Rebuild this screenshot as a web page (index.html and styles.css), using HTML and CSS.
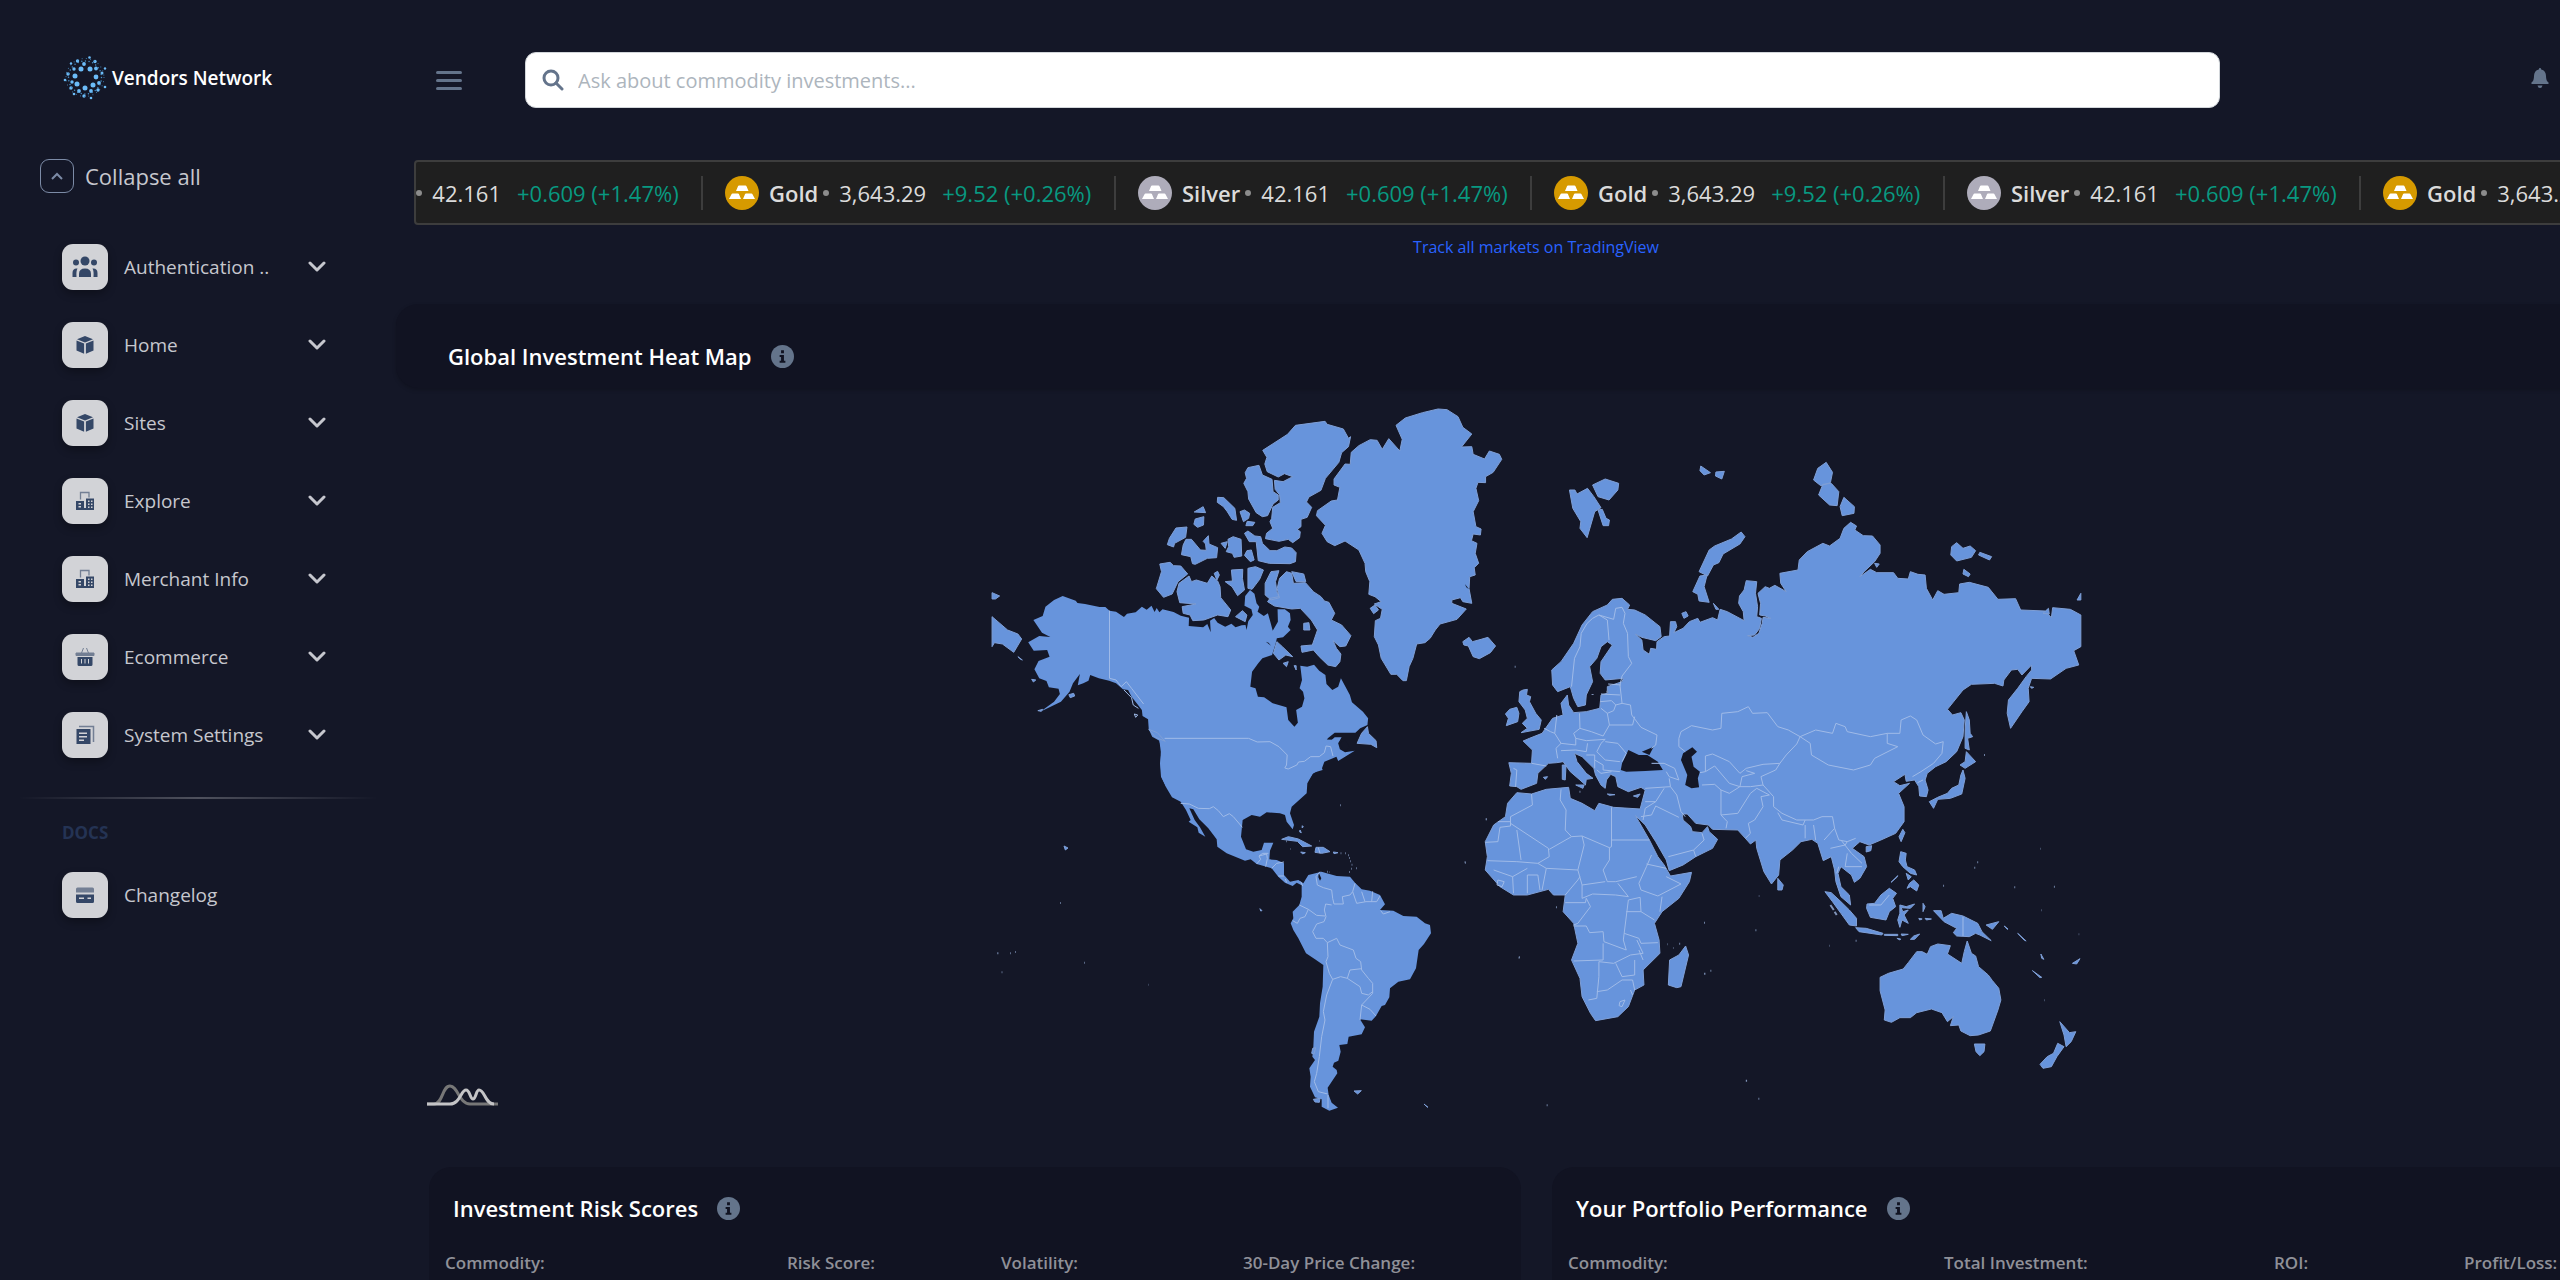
FILE: index.html
```html
<!DOCTYPE html>
<html lang="en">
  <head>
    <meta charset="UTF-8" />
    <meta name="viewport" content="width=device-width, initial-scale=1.0" />
    <title>Vendors Network</title>
    <link rel="stylesheet" href="styles.css">
  </head>
  <body>
    <!-- shared icons -->
    <svg class="sprite" aria-hidden="true">
      <symbol id="chevron" viewBox="0 0 18 12"><path d="M2 2l7 7 7-7" fill="none" stroke="currentColor" stroke-width="3" stroke-linecap="round" stroke-linejoin="round"/></symbol>
      <symbol id="cube" viewBox="0 0 20 20"><path d="M10 1l8 3.200-8 3.300-8-3.300zM1.500 5.500l7.600 3.100v10.200l-7.600-3.200zM18.500 5.500l-7.600 3.100v10.200l7.600-3.200z"/></symbol>
      <symbol id="office" viewBox="0 0 20 20">
        <path d="M5.500 8.500v-7h8.500v5" fill="none" stroke="currentColor" stroke-width="1.300" opacity=".6"/>
        <path fill-rule="evenodd" d="M1 10h8v7h2V7.500h8V19H1zM3.500 12v1.500h2.500V12zM3.500 15v1.500h2.500V15zM13 9.500V11h1.500V9.500zM16 9.500V11h1.500V9.500zM13 12.500V14h1.500v-1.500zM16 12.500V14h1.500v-1.500zM13 15.500V17h1.500v-1.500zM16 15.500V17h1.500v-1.500z"/>
      </symbol>
      <symbol id="basket" viewBox="0 0 20 20">
        <path d="M1 6h18v2.500H1zM6.500 6l2-5M13.500 6l-2-5" stroke="currentColor" opacity=".6"/>
        <path fill-rule="evenodd" d="M2.500 10h15v7.500q0 1.500-1.500 1.500H4q-1.500 0-1.500-1.500zM6 12v4.500h1V12zM9.500 12v4.500h1V12zM13 12v4.500h1V12z"/>
      </symbol>
      <symbol id="papers" viewBox="0 0 20 20">
        <path d="M4 1.500h14.500V17" fill="none" stroke="currentColor" stroke-width="1.500" opacity=".6"/>
        <path fill-rule="evenodd" d="M1.500 4h14v15h-14zM4 7.500V9h8V7.500zM4 11v1.500h8V11zM4 14.500V16h5v-1.500z"/>
      </symbol>
      <symbol id="card" viewBox="0 0 20 20">
        <path d="M1 7.500V4q0-1.500 1.500-1.500h15Q19 2.500 19 4v3.500z" opacity=".6"/>
        <path fill-rule="evenodd" d="M1 9.500h18v7q0 1.500-1.500 1.500h-15Q1 18 1 16.500zM4 12.500V14h5v-1.500zM12.500 12.500V14H16v-1.500z"/>
      </symbol>
      <symbol id="users" viewBox="0 0 26 22">
        <circle cx="13" cy="5" r="4.500"/><circle cx="4" cy="6.500" r="3"/><circle cx="22" cy="6.500" r="3"/>
        <path d="M7 21v-3q0-5.500 6-5.500t6 5.500v3zM.500 21v-4q0-5 5-4.500-1.500 2.500-1 8.500zM25.500 21v-4q0-5-5-4.500 1.500 2.500 1 8.500z"/>
      </symbol>
      <symbol id="info" viewBox="0 0 24 24">
        <circle cx="12" cy="12" r="12" fill="#64748b"/>
        <path d="M10.500 5.500h3v3h-3zM9 10.500h4.500v6H15v2H9v-2h1.500v-4H9z" fill="#111322"/>
      </symbol>
      <symbol id="bars" viewBox="0 0 34 34">
        <circle cx="17" cy="17" r="17"/>
        <path fill="#fff" d="M14 9.500h6.500q.700 0 1 .700l2 4.800h-12.500l2-4.800q.300-.700 1-.700zM7.500 17.500h5.500q.700 0 1 .700l2 4.800H4l2.500-4.800q.300-.700 1-.700zM21 17.500h5.500q.700 0 1 .700L30 23H18l2-4.800q.300-.700 1-.700z"/>
      </symbol>
    </svg>

    <div class="app">
      <aside class="sidebar">
        <a class="brand" href="#">
          <svg width="44" height="44" viewBox="0 0 44 44">
            <g fill="#6cbcf8">
              <circle cx="18" cy="13" r="2.500"/><circle cx="27" cy="13" r="2.500"/><circle cx="33" cy="21" r="2.400"/><circle cx="30" cy="29" r="2.500"/><circle cx="22" cy="32" r="2.500"/><circle cx="14" cy="28" r="2.500"/><circle cx="12" cy="20" r="2.500"/>
              <circle cx="21" cy="8" r="1.900"/><circle cx="33" cy="12.500" r="1.900"/><circle cx="36" cy="27" r="1.900"/><circle cx="28" cy="35" r="1.900"/><circle cx="16" cy="35" r="1.900"/><circle cx="9" cy="26" r="1.700"/><circle cx="11" cy="13" r="1.700"/>
              <circle cx="14.500" cy="5" r="1.700"/><circle cx="32" cy="5.500" r="1.700"/><circle cx="39" cy="17" r="1.500"/><circle cx="35" cy="34" r="1.700"/><circle cx="21" cy="40" r="1.700"/><circle cx="8" cy="32" r="1.700"/><circle cx="5" cy="18" r="1.700"/>
              <circle cx="26.500" cy="1.500" r="1.300"/><circle cx="42" cy="12.500" r="1.200"/><circle cx="42" cy="31" r="1.300"/><circle cx="28" cy="42" r="1.300"/><circle cx="11" cy="38" r="1.300"/><circle cx="2" cy="24" r="1.300"/><circle cx="8" cy="7.500" r="1.200"/>
            </g>
            <g fill="none" stroke="#4a8fc4" stroke-linecap="round">
              <circle cx="22" cy="21.500" r="16.500" stroke-width="1.500" stroke-dasharray="0 3.700"/>
              <circle cx="22" cy="21.500" r="19" stroke-width="1" stroke-dasharray="0 4.300"/>
            </g>
          </svg>
          <span>Vendors Network</span>
        </a>
        <button class="collapse">
          <span class="collapse-box"><svg width="12" height="8" viewBox="0 0 12 8"><path d="M1 7l5-5 5 5" fill="none" stroke="#7c8ba6" stroke-width="2"/></svg></span>
          Collapse all
        </button>
        <nav class="nav">
          <button class="nav-item"><span class="tile"><svg width="26" height="22"><use href="#users"/></svg></span><span class="label">Authentication ..</span><svg class="chevron"><use href="#chevron"/></svg></button>
          <button class="nav-item"><span class="tile"><svg><use href="#cube"/></svg></span><span class="label">Home</span><svg class="chevron"><use href="#chevron"/></svg></button>
          <button class="nav-item"><span class="tile"><svg><use href="#cube"/></svg></span><span class="label">Sites</span><svg class="chevron"><use href="#chevron"/></svg></button>
          <button class="nav-item"><span class="tile"><svg><use href="#office"/></svg></span><span class="label">Explore</span><svg class="chevron"><use href="#chevron"/></svg></button>
          <button class="nav-item"><span class="tile"><svg><use href="#office"/></svg></span><span class="label">Merchant Info</span><svg class="chevron"><use href="#chevron"/></svg></button>
          <button class="nav-item"><span class="tile"><svg><use href="#basket"/></svg></span><span class="label">Ecommerce</span><svg class="chevron"><use href="#chevron"/></svg></button>
          <button class="nav-item"><span class="tile"><svg><use href="#papers"/></svg></span><span class="label">System Settings</span><svg class="chevron"><use href="#chevron"/></svg></button>
        </nav>
        <hr class="divider">
        <h6 class="nav-title">DOCS</h6>
        <a class="nav-item" href="#"><span class="tile"><svg><use href="#card"/></svg></span><span class="label">Changelog</span></a>
      </aside>

      <main class="main">
        <header class="topbar">
          <button class="menu" aria-label="Toggle menu"><i></i><i></i><i></i></button>
          <label class="search">
            <svg width="22" height="22" viewBox="0 0 22 22"><circle cx="9" cy="9" r="7" fill="none" stroke="#64748b" stroke-width="3"/><path d="M14 14l6 6" stroke="#64748b" stroke-width="3" stroke-linecap="round"/></svg>
            <input type="text" placeholder="Ask about commodity investments..." aria-label="Ask about commodity investments">
          </label>
          <button class="bell" aria-label="Notifications"><svg width="18" height="20" viewBox="0 0 18 20"><path fill="#64748b" d="M9 0q1.200 0 1.200 1.400Q15 2.500 15 8q0 5 2.500 6.500.500 1.500-.500 1.500H1q-1 0-.500-1.500Q3 13 3 8q0-5.500 4.800-6.600Q7.800 0 9 0zM6.500 17.500h5Q11 20 9 20t-2.500-2.500z"/></svg></button>
        </header>

        <section class="quotes">
          <div class="ticker">
            <div class="track">
              <div class="quote silver"><svg><use href="#bars"/></svg><b>Silver</b><i></i><span>42.161</span><em>+0.609 (+1.47%)</em></div>
              <div class="quote gold"><svg><use href="#bars"/></svg><b>Gold</b><i></i><span>3,643.29</span><em>+9.52 (+0.26%)</em></div>
              <div class="quote silver"><svg><use href="#bars"/></svg><b>Silver</b><i></i><span>42.161</span><em>+0.609 (+1.47%)</em></div>
              <div class="quote gold"><svg><use href="#bars"/></svg><b>Gold</b><i></i><span>3,643.29</span><em>+9.52 (+0.26%)</em></div>
              <div class="quote silver"><svg><use href="#bars"/></svg><b>Silver</b><i></i><span>42.161</span><em>+0.609 (+1.47%)</em></div>
              <div class="quote gold"><svg><use href="#bars"/></svg><b>Gold</b><i></i><span>3,643.29</span><em>+9.52 (+0.26%)</em></div>
            </div>
          </div>
          <a class="track-link" href="#">Track all markets on TradingView</a>
        </section>

        <section class="heat-head">
          <h5 class="title">Global Investment Heat Map <svg><use href="#info"/></svg></h5>
        </section>

        <svg class="map" viewBox="427 388 2218 747" role="img" aria-label="World map">
          <!-- the Americas, southern part -->
          <g transform="translate(1060 720) scale(.33333)">
            <path class="land" d="M300,40L298,62 305,90 300,130 303,170 320,205 336,232 362,245 378,270 392,300 386,305 412,322 416,338 436,350 420,322 404,300 388,265 400,268 418,298 445,325 470,358 472,380 500,400 555,422 572,418 590,432 635,445 655,470 675,488 698,498 710,488 725,496 725,530 718,555 698,575 700,595 692,610 700,630 715,655 738,700 765,718 790,735 788,800 780,850 778,890 762,935 760,980 757,1010 765,1020 748,1045 752,1070 750,1100 765,1132 785,1138 785,1160 808,1172 834,1163 815,1148 806,1125 803,1103 815,1085 832,1060 830,1050 818,1040 822,1028 835,1022 842,995 838,975 862,972 866,950 905,943 915,922 900,898 935,902 948,888 965,858 975,855 988,832 990,805 1015,785 1050,778 1068,745 1076,690 1092,672 1113,640 1110,615 1095,610 1070,590 1030,588 1000,572 960,570 975,553 960,525 930,512 905,508 885,488 870,470 830,468 800,460 785,455 745,465 730,490 715,480 690,485 672,465 672,430 650,420 628,418 630,392 640,368 612,368 605,390 580,395 558,388 543,350 548,300 575,285 600,290 620,277 660,280 675,285 680,305 698,328 702,315 690,280 695,260 740,220 742,190 760,158 788,150 770,100 840,60Z"/>
            <path class="isle" d="M665,358L685,350 715,357 755,378 728,380 712,364ZM768,382L790,382 810,395 785,400 765,397ZM722,396L736,398 728,402ZM820,396L834,398 822,401ZM882,1113L904,1112 893,1122ZM1092,1152L1104,1162 1098,1158ZM12,378L24,384 16,390ZM600,566L606,572 602,573ZM720,330L724,338 719,336ZM727,317L730,321 726,323ZM758,985L767,983 762,1002 755,1000ZM760,1138L780,1135 778,1147 765,1146Z"/>
            <path class="dots" d="M841,256h2M1215,428h2M1278,298h2M72,728h2M264,794h1M0,549h2M678,364h2M691,387h1M778,363h1M842,400h2M856,400h2M864,406h2M868,414h2M870,424h2M875,434h2M873,446h2M889,445h2M868,456h2M802,455h2M808,457h1M1376,713h2M-188,700h3M-150,700h2M-135,696h2M-175,757h2"/>
            <path class="sea" d="M776,458L784,475 780,482 775,472Z"/>
            <path class="border" d="M313,55H566L590,65 630,66 660,82 683,108 682,130 675,143 685,149 710,135 718,126 735,124 755,107 780,107 792,97 798,78 812,79 818,105M362,250L388,252 415,265 448,266 460,260 475,272 490,290 508,281 520,290 547,322M590,432L602,418 597,408 620,402M620,402L622,416 617,440M597,408L608,400 625,400M635,445L650,430 672,426M655,468L672,468M676,477L680,488M722,485L728,498M780,455L768,470 772,495 790,503 815,510 818,535 822,552 850,552 847,530 870,525 878,515M815,555L797,552 793,570 798,590 792,605 M718,555L745,568 770,586 795,588M745,568L735,590 720,595 712,610 698,602M792,605L770,612 758,635 768,655 790,655 802,668 830,655 840,675 880,690 888,715 902,725 905,750 925,775 938,790 938,820 905,855 900,900M802,668L804,710 798,725 808,760 818,778 800,825 790,875 795,900 785,950 778,1010 770,1060 763,1085 775,1115 803,1122M818,778L842,770 862,775 870,750 905,746M862,775L900,800 905,820 925,825 938,815M905,855L930,868 948,888M878,515L885,490M878,515L890,550 918,545 950,545 960,528M905,515L915,545M938,514L935,545M775,383L780,400M804,1125V1165M962,572L970,582 990,575"/>
          </g>
          <!-- Alaska, Canada and Greenland -->
          <g transform="translate(980 400) scale(.34439 .33333)">
            <path class="land" d="M240,588L278,602 283,609 305,612 347,621 364,621 376,632 395,635 418,651 427,641 452,637 470,620 484,629 498,617 507,636 513,624 521,637 530,628 562,636 583,647 607,653 606,678 648,682 660,672 670,697 668,662 680,654 690,668 712,680 730,671 742,682 760,676 771,675 774,690 779,664 792,645 788,628 768,617 770,588 784,570 797,581 803,610 811,620 806,635 824,648 836,640 843,665 850,692 865,665 864,628 885,628 900,640 902,660 894,680 902,690 880,712 862,715 858,733 848,765 820,775 808,790 790,815 785,860 800,865 807,890 825,892 850,910 890,922 895,960 913,980 923,968 918,930 935,920 942,895 938,875 928,865 935,840 930,797 950,800 970,794 985,812 1003,825 1006,852 1023,870 1040,860 1048,835 1074,885 1080,907 1112,935 1127,955 1125,975 1104,985 1090,998 1030,998 1010,1015 995,1040 1010,1030 1030,1012 1050,1012 1040,1030 1045,1048 1060,1057 1088,1052 1060,1070 1040,1083 1035,1070 1000,1085 993,1105 965,1122 948,1150 920,1180 570,1180 540,1160 527,1130 524,1090 525,1055 521,1022 500,1010 490,988 488,958 472,948 470,930 455,910 440,890 430,870 415,868 395,850 375,842 345,835 320,825 315,842 300,850 284,856 290,822 270,850 260,875 235,905 205,920 175,935 215,905 232,882 228,866 200,862 193,843 172,835 158,808 170,783 202,770 195,750 156,752 140,727 172,708 204,711 180,698 155,660 182,648 190,620 215,600Z"/>
            <path class="isle" d="M35,578L57,588 45,597 35,597ZM35,650L80,690 110,702 121,717 98,757 65,732 42,728 35,740ZM110,770L123,780 118,778ZM150,838L162,840 155,846ZM258,884L272,880 275,888 262,893ZM168,932L182,928 178,934Z"/>
            <path class="isle" d="M1070,115L1055,87 1008,73 1002,64 916,76 893,103 821,151 833,172 827,192 834,215 866,231 884,221 908,230 880,245 855,241 857,268 870,285 872,308 850,322 847,355 842,365 850,385 832,400 829,416 868,424 895,418 908,428 928,413 930,395 921,388 932,380 932,358 950,352 963,322 948,306 955,291 990,271 1003,235 1042,187 1050,158 1070,140 1076,110Z"/>
            <path class="isle" d="M778,203L810,196 820,225 848,238 851,275 866,285 866,300 851,312 835,347 820,350 802,338 780,297 778,275 766,250 774,235 770,218ZM690,292L708,293 740,325 745,361 732,358 718,335 707,320 689,307ZM622,336L648,320 655,338ZM625,357L650,350 649,375 632,382 621,373ZM569,384L601,381 597,412 565,430 562,441 544,434 550,415ZM598,418L614,418 640,450 657,451 655,432 648,424 663,407 665,432 690,443 687,473 660,475 625,493 617,491 612,470 585,464 590,435ZM755,335L768,330 783,340 780,355 765,365ZM776,364L798,367 792,377 772,377ZM700,430L718,425 712,445ZM735,410L758,418 760,468 738,472 733,460 715,455 722,440 720,418ZM768,400L778,393 798,408 815,410 820,430 842,452 862,452 885,441 905,444 918,458 916,485 900,491 840,490 808,482 802,425 782,425ZM775,452L788,450 796,480 785,485 768,466ZM522,492L552,487 562,497 583,498 603,522 575,545 558,582 533,592 512,566 527,515ZM607,528L614,545 628,540 660,550 673,528 690,543 697,560 699,593 728,630 720,650 690,645 650,660 618,662 610,645 590,640 587,620 627,612 580,608 572,575 578,550ZM680,520L690,514 695,525 688,540ZM730,510L763,508 762,535 768,570 748,587 732,560 712,545 733,543ZM778,505L800,500 823,510 812,538 790,568 778,565ZM742,650L762,632 775,645 770,665ZM845,515L868,512 858,545 862,575 870,593 845,600 828,585 828,550ZM870,535L890,515 905,520 910,550 945,548 968,575 990,590 1000,603 1013,607 1030,640 1020,660 1050,675 1077,707 1062,738 1045,740 1025,722 1035,745 1048,762 1045,785 1033,800 1010,795 985,770 968,750 935,757 932,738 965,735 980,690 962,660 930,625 905,627 855,618 835,605 842,595 868,590 863,565ZM905,515L940,522 946,545 918,545ZM940,670L955,668 958,690 940,690ZM852,760L862,725 878,740 900,762 908,770 888,765 868,780ZM880,790L895,785 890,800ZM912,797L918,797 918,810ZM1125,980L1128,1000 1150,1022 1152,1043 1135,1033 1095,1030 1108,1000ZM490,988L515,998 538,1024 510,1012Z"/>
            <path class="isle" d="M1078,157L1100,137 1133,119 1153,121 1168,148 1187,116 1219,153 1226,118 1208,76 1235,54 1285,38 1330,27 1356,29 1388,50 1402,82 1428,102 1398,141 1428,140 1432,163 1465,177 1479,153 1508,163 1515,178 1490,217 1468,230 1468,248 1446,247 1440,265 1448,302 1432,335 1440,380 1455,387 1453,405 1432,402 1427,422 1443,430 1438,460 1448,490 1435,503 1438,525 1422,530 1420,566 1428,610 1402,605 1395,593 1370,600 1370,610 1412,627 1385,658 1336,672 1322,690 1307,715 1292,728 1268,732 1257,775 1246,800 1238,842 1228,842 1210,823 1193,823 1165,775 1157,735 1145,710 1148,662 1163,655 1168,628 1145,612 1165,605 1147,590 1129,583 1132,545 1120,515 1118,490 1100,450 1060,423 1030,437 1008,425 993,400 1003,376 977,347 980,332 1020,303 1038,300 1045,262 1028,255 1028,237 1060,192 1075,193ZM1133,625L1147,615 1157,630 1143,641ZM1402,725L1420,712 1430,725 1455,718 1475,712 1497,738 1482,758 1450,776 1432,770 1418,738 1405,735Z"/>
            <path class="sea" d="M830,725L845,737 838,728ZM1045,1030L1060,1020 1075,1045 1055,1050ZM1408,552L1420,568 1412,562Z"/>
            <path class="border" d="M376,632V835L395,840 410,860 425,845 440,865 475,912 M418,870L440,893 445,915 460,925M448,942L458,945 452,952ZM536,1015H780L805,1026 842,1025 868,1040 892,1065 890,1095 885,1104 895,1107 920,1095 925,1086 942,1084 960,1070 985,1070 1000,1058 1005,1038 1018,1040 1025,1068"/>
          </g>
          <!-- Europe, Asia, Africa and Oceania -->
          <g transform="translate(1460 440) scale(.42092 .33333)">
            <path class="isle" d="M218,690L240,665 270,610 290,555 315,515 350,495 362,478 385,475 403,495 398,508 415,510 440,525 475,560 478,590 465,602 432,592 417,583 432,600 435,630 450,643 453,625 467,628 468,605 485,590 498,588 500,545 512,545 515,560 508,578 530,565 545,545 565,535 570,547 600,533 612,540 618,508 635,515 675,542 673,515 662,490 664,468 675,450 680,422 705,425 702,460 707,500 705,530 716,535 712,565 700,585 683,587 696,592 710,580 718,550 720,532 738,535 725,528 712,525 714,490 708,460 725,440 735,445 748,436 775,455 762,430 760,400 803,390 806,360 825,335 862,310 878,318 903,295 912,265 928,247 942,258 938,270 958,287 980,288 998,315 998,340 985,365 960,395 950,410 975,388 990,398 1030,398 1040,415 1065,417 1070,395 1088,403 1105,405 1108,445 1123,480 1135,452 1150,463 1185,458 1187,432 1210,427 1255,442 1278,478 1320,476 1332,510 1390,513 1405,533 1408,503 1450,508 1475,525 1475,620 1458,632 1470,675 1440,685 1403,717 1358,715 1350,745 1352,785 1335,815 1308,865 1300,820 1303,780 1325,745 1345,710 1358,690 1358,675 1335,705 1325,688 1310,690 1292,720 1290,738 1270,730 1215,733 1195,750 1158,808 1170,825 1190,818 1198,840 1195,890 1180,935 1155,965 1130,980 1110,1000 1105,1020 1112,1050 1108,1070 1092,1068 1090,1040 1080,1020 1060,1024 1057,1003 1030,1025 1045,1037 1068,1030 1042,1060 1055,1100 1055,1145 1035,1180 1000,1200 972,1215 950,1205 932,1225 960,1250 966,1280 950,1315 937,1327 930,1305 905,1280 898,1300 905,1340 925,1365 928,1395 905,1370 893,1325 890,1290 882,1250 863,1262 850,1210 836,1198 810,1205 790,1230 760,1260 757,1305 740,1332 722,1295 705,1225 703,1200 690,1212 678,1195 660,1170 600,1168 590,1155 560,1150 540,1122 528,1122 530,1140 548,1160 552,1175 575,1178 588,1160 592,1175 612,1198 600,1225 560,1250 530,1275 497,1292 490,1260 465,1205 440,1155 428,1140 417,1127 425,1145 450,1200 470,1250 485,1275 500,1308 550,1297 545,1325 520,1375 480,1415 462,1450 473,1500 475,1540 435,1590 437,1635 415,1650 400,1700 375,1730 322,1742 310,1720 290,1670 285,1615 265,1560 280,1510 270,1450 245,1415 250,1365 222,1365 210,1348 160,1365 127,1365 95,1340 60,1290 65,1250 60,1205 80,1155 108,1130 113,1090 135,1058 170,1062 205,1048 258,1042 262,1075 290,1090 320,1112 330,1090 365,1102 428,1107 440,1050 430,1042 400,1055 375,1040 370,1010 358,1003 348,1020 345,1045 335,1035 322,1005 318,985 290,950 272,940 278,965 300,1000 316,1015 300,1018 298,1035 285,1020 262,995 245,965 230,968 210,970 185,1000 182,1030 145,1048 135,1040 118,1038 122,1000 116,968 170,970 172,930 150,903 165,895 195,880 220,835 245,825 240,790 255,765 258,795 270,818 300,815 332,805 335,765 350,760 350,740 385,725 388,715 345,720 333,700 335,665 362,615 350,605 335,620 325,655 308,680 315,725 300,765 298,795 280,800 270,775 262,740 232,755 220,735Z"/>
            <path class="isle" d="M150,750L160,748 158,765 168,770 165,785 180,820 193,840 188,868 145,878 160,865 148,850 160,835 155,810 140,785 142,755ZM118,808L135,802 140,820 137,845 110,857 115,835 108,822ZM260,150L273,150 278,162 303,145 318,170 335,203 320,215 302,293 285,265 287,245 268,205ZM315,135L345,117 377,130 375,150 354,180 328,170ZM328,210L338,208 347,235 355,240 353,257 340,257ZM572,78L595,98 580,105 570,92ZM608,96L628,94 622,117 607,108ZM870,67L885,97 880,128 857,137 840,120 850,85ZM862,133L882,130 900,155 896,197 878,195 852,165ZM912,172L937,200 936,220 908,227 903,200ZM668,276L677,290 665,312 625,342 615,368 602,375 588,408 568,395 592,330 605,318 645,297ZM570,408L587,405 580,440 592,487 568,483 565,463 553,455ZM602,490L615,508 608,508ZM527,520L537,515 542,528 532,535ZM1180,308L1195,325 1212,318 1225,332 1215,352 1180,363 1166,345 1168,320ZM1235,337L1263,350 1258,360 1232,345ZM1197,388L1212,402 1208,410 1195,402ZM1475,460V480L1466,480ZM985,370L996,372 990,382ZM1203,815L1210,840 1212,880 1218,890 1206,895 1210,930 1200,925 1200,870ZM1203,935L1225,965 1200,985 1188,975 1200,965ZM1195,990L1200,1015 1192,1062 1165,1075 1135,1078 1125,1105 1115,1085 1135,1072 1158,1060 1168,1045 1185,1035 1190,1005ZM1052,1168L1057,1178 1048,1205 1043,1190ZM965,1220L978,1217 976,1232 965,1236ZM243,975L252,975 250,1020 243,1018ZM275,1035L295,1035 292,1045ZM350,1062L368,1064 355,1066ZM412,1068L428,1062 422,1072ZM198,1012L208,1010 203,1018ZM755,1315L768,1335 765,1350 755,1350ZM1385,520L1398,505 1400,522ZM1355,740L1363,742 1358,745Z"/>
            <path class="isle" d="M867,1355L882,1358 905,1385 925,1410 942,1435 942,1458 925,1455 905,1420 885,1385ZM940,1463L965,1465 1005,1480 1002,1485 948,1475ZM1008,1483L1040,1483 1040,1487 1008,1486ZM1048,1482L1065,1483 1050,1487ZM1092,1482L1080,1498 1070,1498 1078,1488ZM1038,1495L1047,1497 1045,1500ZM967,1392L985,1390 1000,1365 1020,1345 1037,1360 1028,1375 1035,1400 1020,1415 1012,1440 975,1432 966,1405ZM1045,1395L1060,1400 1080,1392 1070,1405 1048,1403 1052,1415 1065,1410 1055,1425 1065,1450 1050,1440 1045,1462 1040,1440 1045,1420ZM1047,1235L1060,1240 1058,1260 1062,1280 1080,1290 1085,1305 1070,1300 1052,1280 1043,1265ZM1078,1320L1090,1335 1085,1353 1070,1340 1062,1345 1068,1330ZM1060,1300L1072,1310 1065,1320ZM1024,1327L1040,1307 1038,1312ZM1100,1390L1105,1400 1100,1415ZM1105,1435L1120,1437 1108,1440ZM1090,1435L1098,1437 1092,1440ZM1125,1412L1143,1412 1148,1435 1168,1420 1195,1428 1230,1450 1240,1475 1262,1502 1235,1485 1225,1480 1210,1490 1180,1488 1172,1478 1180,1465 1150,1445ZM1250,1455L1280,1445 1265,1468ZM1293,1458L1302,1467 1300,1468ZM1325,1480L1345,1503 1340,1500ZM1380,1542L1387,1558 1382,1555ZM1360,1592L1382,1612 1378,1613ZM1455,1570L1473,1556 1465,1572ZM998,1612L1018,1600 1053,1587 1065,1568 1085,1535 1098,1535 1110,1543 1118,1520 1135,1512 1165,1517 1158,1542 1192,1570 1198,1535 1205,1503 1215,1540 1225,1548 1232,1580 1255,1605 1265,1622 1280,1645 1285,1680 1278,1710 1260,1773 1232,1785 1212,1787 1190,1773 1185,1755 1165,1757 1172,1730 1158,1745 1145,1718 1120,1707 1085,1718 1070,1733 1045,1733 1025,1747 1008,1740 1010,1710 998,1652ZM1222,1812L1247,1812 1245,1835 1235,1847 1226,1835ZM1425,1745L1448,1778 1463,1775 1452,1805 1440,1820 1435,1785ZM1420,1810L1435,1820 1418,1850 1405,1880 1385,1885 1378,1873 1395,1850 1410,1840ZM536,1518L543,1545 525,1640 515,1643 495,1635 498,1560 520,1545Z"/>
            <path class="sea" d="M385,970L400,930 425,945 445,945 470,965 482,990 440,993 395,995 382,990ZM432,935L460,920 450,945ZM552,922L563,935 550,950 555,980 570,995 565,1015 568,1042 550,1045 535,1035 540,1005 525,960 530,940Z"/>
            <path class="dots" d="M130,680h2M1245,945h2M61,1138h2M11,1267h2M228,1402h2M140,1552h2M580,1448h2M702,1471h2M710,1368h1M493,1513h1M521,1511h2M580,1601h3M595,1592h2M679,1922h3M709,1976h2M206,1996h2M940,1502h2M878,1517h1M1148,1337h2M1229,1267h2M1222,1283h2M1378,1226h1M1317,1342h2M1411,1340h2M1381,1411h1M1470,1483h1M1388,1681h1M880,1395l8,15M890,1415l5,10M315,762v3M348,755h4M284,1055h2M506,1524h1"/>
            <path class="border" d="M265,740L272,655 285,620 288,580 302,550 315,535 330,525 350,540 354,600M330,525L365,538 370,505 385,502 392,520 388,550 398,580 400,650 408,670 385,708M385,708L380,735 385,790 405,795 408,825 430,862 468,885 465,915 455,925M352,732L382,735M335,762L380,765M333,785L360,782 370,795 385,790M370,795L365,812 350,820 335,805M350,820L355,855 410,855 415,830M284,820L285,865 312,875 340,888 355,855M285,865L270,880 275,895 300,902 345,898 335,910 325,935 M230,825L225,880 215,875 200,865M225,880L240,910 228,925 232,955 M240,910L275,915 275,895M240,932L275,930 300,935 303,910M345,905L375,910 395,940 385,965M325,935L345,960 380,965M300,945L320,945 320,985M320,960L340,975 340,990 380,995M325,990L335,1000 360,995M127,985L135,990 132,1040M170,970L205,978M455,970L485,970 510,985 520,1020 497,1010 490,995M497,1015L500,1040 440,1045M500,1040L515,1065 525,1115 535,1130M440,1085L465,1085 485,1045M430,1130L455,1125 465,1098 520,1132M465,1085L440,1105 435,1140M520,895L525,875 550,857 600,870 620,865 622,820 660,815 685,800 695,820 730,818 755,860 780,870 808,890 800,912 775,945 760,970 720,973 680,985 665,1000 640,965 600,942 583,948V995L570,998M520,895L520,920 535,935M583,995L605,978 640,1030 665,1040 670,1010 700,1000 680,992M760,970L750,990 715,1010 720,1035 690,1040 665,1040 640,1060 620,1050 605,1033 575,1035M620,1050V1125L635,1145 632,1165M620,1125L660,1120 690,1060 705,1045M720,1035L745,1070 745,1100 765,1120 800,1140 840,1140 860,1130 885,1130 890,1165 865,1200M705,1045L735,1065 715,1070 720,1100 700,1140 685,1150 690,1180 678,1195M755,1118L765,1140 815,1155 820,1140M820,1155L820,1195M840,1155L845,1200M808,890L845,870 885,880 893,850 915,860 920,875 975,890 1015,880 1045,880 1048,840 1070,828 1085,840 1100,885 1130,912 1148,905 1145,940 1125,970M808,890L832,910 835,945 875,975 935,990 975,975 985,955 1040,920 1015,910 1015,880M1125,970L1095,995 1075,1010M1087,1028L1100,1020M890,1165L900,1200 920,1205 915,1215 880,1225M905,1200L930,1240 955,1270M920,1240L915,1280 955,1280M920,1205L940,1195M895,1300L900,1280M1195,1430V1488M972,1395L1000,1395 1020,1365"/>
            <path class="border" d="M170,1062L172,1095 120,1130 120,1158 95,1162 90,1205 60,1207M120,1150L210,1225 212,1250 185,1270 135,1265 65,1262M135,1170L145,1260M90,1145H120M240,1048L238,1080 252,1110 250,1170 265,1190 212,1228M265,1190L290,1188 295,1215 280,1290 205,1285 185,1270M290,1188L355,1223 M360,1102V1220L355,1223 355,1260 340,1290 350,1325 370,1325 420,1310M360,1200H450M455,1245L443,1280 425,1330 430,1350 470,1368 525,1332 490,1310M443,1272L490,1285M280,1290L290,1335 345,1325M290,1335L290,1375 315,1362 370,1365 400,1370 375,1330M250,1365L280,1320 285,1310M205,1285L195,1350M160,1360V1305L185,1305 190,1350M127,1360L125,1310 80,1290M125,1310L160,1285M250,1388H298L300,1375M300,1375L310,1400 280,1450 270,1455M270,1458H300L308,1478 340,1475 342,1505 395,1530 388,1500 390,1480 400,1380 428,1372 430,1415 462,1440M390,1480L425,1495 430,1510 470,1508M395,1415H430M340,1510V1560L270,1563M330,1565L365,1570 405,1545 435,1540 420,1500M370,1570L385,1610 415,1605 415,1560M330,1565V1610L325,1675 305,1680M325,1655L350,1650 385,1620 410,1620 415,1650M380,1685L392,1680 385,1700 378,1697ZM405,1650L410,1665M480,1370L475,1415M495,1250L555,1230 580,1200 575,1180M555,1230L560,1250M425,1530L435,1560M90,1320L105,1325 100,1340 88,1335Z"/>
          </g>
          <!-- chart library mark -->
          <g fill="none" stroke-width="3">
            <path stroke="#777" d="M427 1104H434C443 1104 442 1086 450 1086S459 1104 470 1104H498"/>
            <path stroke="#c4c4c6" d="M427 1104H450C460 1104 461 1090 466 1090 470 1090 470 1099 473 1099S476 1090 479 1090C485 1090 485 1104 494 1104"/>
          </g>
        </svg>

        <div class="cards">
          <section class="card">
            <h5 class="title">Investment Risk Scores <svg><use href="#info"/></svg></h5>
            <table class="risk">
              <thead>
                <tr><th>Commodity:</th><th>Risk Score:</th><th>Volatility:</th><th>30-Day Price Change:</th></tr>
              </thead>
            </table>
          </section>
          <section class="card">
            <h5 class="title">Your Portfolio Performance <svg><use href="#info"/></svg></h5>
            <table class="portfolio">
              <thead>
                <tr><th>Commodity:</th><th>Total Investment:</th><th>ROI:</th><th>Profit/Loss:</th></tr>
              </thead>
            </table>
          </section>
        </div>
      </main>
    </div>
  </body>
</html>
```
FILE: styles.css
```css
* {
  box-sizing: border-box;
}

body {
  margin: 0;
  background: #141727;
  color: #fff;
  font-family: "Open Sans", "Noto Sans", sans-serif;
  overflow: hidden;
}

button {
  padding: 0;
  border: 0;
  background: none;
  font: inherit;
  cursor: pointer;
}

a {
  text-decoration: none;
}

.sprite {
  position: absolute;
  width: 0;
  height: 0;
}

.app {
  display: grid;
  grid-template-columns: 396px 1fr;
  height: 100vh;
  overflow: hidden;
}

/* sidebar */
.sidebar {
  padding: 56px 40px 0;
}

.brand {
  display: flex;
  align-items: center;
  gap: 5px;
  margin-left: 23px;
  height: 44px;
  color: #fff;
  font-size: 19px;
  font-weight: 600;
}

.collapse {
  display: flex;
  align-items: center;
  gap: 11px;
  height: 36px;
  margin: 58px 0 50px;
  color: #c6c7ce;
  font-size: 22px;
}

.collapse-box {
  display: flex;
  align-items: center;
  justify-content: center;
  width: 34px;
  height: 34px;
  border: 1px solid #7c8ba6;
  border-radius: 9px;
}

.nav {
  display: flex;
  flex-direction: column;
  gap: 32px;
}

.nav-item {
  display: flex;
  align-items: center;
  width: 292px;
  height: 46px;
  padding-left: 22px;
  padding-right: 6px;
  color: #c6c7ce;
  font-size: 19px;
  text-align: left;
}

.nav-item .label {
  flex: 1;
}

.tile {
  display: flex;
  align-items: center;
  justify-content: center;
  width: 46px;
  height: 46px;
  margin-right: 16px;
  border-radius: 11px;
  background: #d2d3d7;
  color: #344767;
  fill: currentColor;
  box-shadow: 0 4px 8px rgba(0, 0, 0, 0.3);
}

.tile svg:not([width]) {
  width: 20px;
  height: 20px;
}

.chevron {
  width: 18px;
  height: 12px;
}

.divider {
  height: 2px;
  margin: 39px -22px 21px -22px;
  border: 0;
  background: linear-gradient(90deg, transparent, rgba(255, 255, 255, 0.25), transparent);
}

.nav-title {
  margin: 0 0 26px 22px;
  color: #243354;
  font-size: 17px;
  line-height: 26px;
  font-weight: 700;
}

/* content, wider than the window */
.main {
  margin-right: -116px;
  min-width: 0;
}

.topbar {
  display: flex;
  align-items: center;
  padding: 52px 127px 0 40px;
}

.menu {
  display: flex;
  flex-direction: column;
  gap: 5px;
  width: 26px;
}

.menu i {
  height: 3px;
  border-radius: 2px;
  background: #64748b;
}

.search {
  display: flex;
  align-items: center;
  flex: 1;
  gap: 12px;
  height: 56px;
  margin: 0 311px 0 63px;
  padding: 0 16px;
  border: 1px solid #d2d6da;
  border-radius: 11px;
  background: #fff;
}

.search input {
  flex: 1;
  border: 0;
  outline: 0;
  background: none;
  font: 20px "Open Sans", sans-serif;
}

.search input::placeholder {
  color: #adb5bd;
}

.bell {
  height: 24px;
}

.quotes {
  padding: 52px 18px 0;
  text-align: center;
}

.ticker {
  height: 65px;
  border: 2px solid #3d3d3d;
  border-radius: 4px;
  background: #1f1f1f;
  overflow: hidden;
}

.track {
  display: flex;
  align-items: center;
  height: 61px;
  margin-left: -131px;
}

.quote {
  display: flex;
  align-items: center;
  flex: none;
  height: 34px;
  padding-left: 22px;
  border-left: 2px solid #3d3d3d;
  color: #dbdbdb;
  font-size: 22px;
}

.gold {
  width: 413px;
}

.silver {
  width: 416px;
}

.quote svg {
  width: 34px;
  height: 34px;
  margin-right: 10px;
}

.gold svg {
  fill: #d69a00;
}

.silver svg {
  fill: #aeacba;
}

.quote b {
  font-weight: 600;
}

.quote i {
  width: 6px;
  height: 6px;
  margin: 0 10px 0 5px;
  border-radius: 50%;
  background: #8c8c8c;
}

.quote em {
  margin-left: 16px;
  color: #089981;
  font-style: normal;
}

.track-link {
  display: inline-block;
  margin-top: 9px;
  color: #2962ff;
  font-size: 16px;
  line-height: 26px;
}

.heat-head {
  height: 84px;
  margin-top: 44px;
  padding: 36px 52px 0;
  border-radius: 22px;
  background: #111322;
  box-shadow: 0 2px 4px rgba(0, 0, 0, 0.2);
}

.title {
  display: flex;
  align-items: center;
  gap: 19px;
  margin: 0;
  font-size: 22px;
  line-height: 32px;
  font-weight: 600;
}

.title svg {
  width: 23px;
  height: 23px;
}

/* world map */
.map {
  display: block;
  width: calc(100% - 62px);
  margin: 0 31px;
}

.land {
  fill: #6794dc;
}

.isle {
  fill: #6794dc;
  stroke: #7f9fd6;
  vector-effect: non-scaling-stroke;
}

.sea {
  fill: #141727;
}

.border {
  fill: none;
  stroke: #a0bbe8;
  stroke-width: 1;
  vector-effect: non-scaling-stroke;
}

.dots {
  fill: none;
  stroke: #7f93b8;
  stroke-width: 2;
  vector-effect: non-scaling-stroke;
}

.cards {
  display: grid;
  grid-template-columns: 1fr 1fr;
  gap: 31px;
  margin: 32px 32px 0 33px;
}

.card {
  min-height: 400px;
  padding-top: 25px;
  border-radius: 22px;
  background: #111322;
}

.card .title {
  padding: 0 24px;
}

.card table {
  width: 100%;
  margin-top: 26px;
  border-collapse: collapse;
  table-layout: fixed;
}

.card th {
  padding: 0 0 0 16px;
  color: #8f9098;
  font-size: 17px;
  line-height: 26px;
  font-weight: 600;
  text-align: left;
}

.risk th:nth-child(1) {
  width: 342px;
}

.risk th:nth-child(2) {
  width: 214px;
}

.risk th:nth-child(3) {
  width: 242px;
}

.portfolio th:nth-child(1) {
  width: 376px;
}

.portfolio th:nth-child(2) {
  width: 330px;
}

.portfolio th:nth-child(3) {
  width: 190px;
}
```
